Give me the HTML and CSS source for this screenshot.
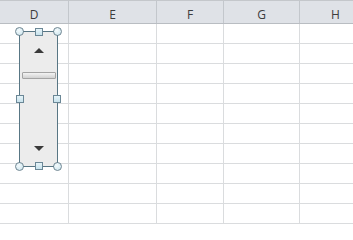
FILE: index.html
```html
<!DOCTYPE html>
<html>
<head>
<meta charset="utf-8">
<link rel="stylesheet" href="styles.css">
</head>
<body>
<div class="sheet">
  <div class="header">
    <div class="hcell c-d">D</div>
    <div class="hcell c-e">E</div>
    <div class="hcell c-f">F</div>
    <div class="hcell c-g">G</div>
    <div class="hcell c-h">H</div>
  </div>
  <div class="rows">
    <div class="row"><div class="cell c-d"></div><div class="cell c-e"></div><div class="cell c-f"></div><div class="cell c-g"></div><div class="cell c-h"></div></div>
    <div class="row"><div class="cell c-d"></div><div class="cell c-e"></div><div class="cell c-f"></div><div class="cell c-g"></div><div class="cell c-h"></div></div>
    <div class="row"><div class="cell c-d"></div><div class="cell c-e"></div><div class="cell c-f"></div><div class="cell c-g"></div><div class="cell c-h"></div></div>
    <div class="row"><div class="cell c-d"></div><div class="cell c-e"></div><div class="cell c-f"></div><div class="cell c-g"></div><div class="cell c-h"></div></div>
    <div class="row"><div class="cell c-d"></div><div class="cell c-e"></div><div class="cell c-f"></div><div class="cell c-g"></div><div class="cell c-h"></div></div>
    <div class="row"><div class="cell c-d"></div><div class="cell c-e"></div><div class="cell c-f"></div><div class="cell c-g"></div><div class="cell c-h"></div></div>
    <div class="row"><div class="cell c-d"></div><div class="cell c-e"></div><div class="cell c-f"></div><div class="cell c-g"></div><div class="cell c-h"></div></div>
    <div class="row"><div class="cell c-d"></div><div class="cell c-e"></div><div class="cell c-f"></div><div class="cell c-g"></div><div class="cell c-h"></div></div>
    <div class="row"><div class="cell c-d"></div><div class="cell c-e"></div><div class="cell c-f"></div><div class="cell c-g"></div><div class="cell c-h"></div></div>
    <div class="row"><div class="cell c-d"></div><div class="cell c-e"></div><div class="cell c-f"></div><div class="cell c-g"></div><div class="cell c-h"></div></div>
  </div>

  <div class="scrollctl">
    <div class="arrow-up"></div>
    <div class="thumb"></div>
    <div class="arrow-down"></div>

    <span class="h-circle tl"></span>
    <span class="h-circle tr"></span>
    <span class="h-circle bl"></span>
    <span class="h-circle br"></span>
    <span class="h-square tm"></span>
    <span class="h-square bm"></span>
    <span class="h-square ml"></span>
    <span class="h-square mr"></span>
  </div>
</div>
</body>
</html>
```
FILE: styles.css
```css
html, body {
  margin: 0;
  padding: 0;
  background: #ffffff;
  overflow: hidden;
}

.sheet {
  position: relative;
  width: 353px;
  height: 226px;
  overflow: hidden;
  font-family: "Open Sans", "DejaVu Sans", sans-serif;
}

.header {
  display: flex;
  height: 24px;
  box-sizing: border-box;
  border-top: 1px solid #c4c7cb;
  border-bottom: 1px solid #b9bdc2;
  background: #dfe2e7;
}

.hcell {
  box-sizing: border-box;
  border-right: 1px solid #c3c7cc;
  text-align: center;
  font-size: 12px;
  line-height: 15px;
  padding-top: 6px;
  color: #3c3c3c;
  flex: none;
}

.c-d { width: 69px; }
.c-e { width: 88px; }
.c-f { width: 67px; }
.c-g { width: 76px; }
.c-h { width: 72px; }

.rows {
  display: flex;
  flex-direction: column;
}

.row {
  display: flex;
  height: 20px;
  box-sizing: border-box;
  border-bottom: 1px solid #dadcde;
}

.cell {
  box-sizing: border-box;
  border-right: 1px solid #dadcde;
  flex: none;
}

/* scrollbar form control overlay */
.scrollctl {
  position: absolute;
  left: 19px;
  top: 31px;
  width: 39px;
  height: 136px;
  box-sizing: border-box;
  border: 1px solid #587684;
  background: #ececec;
  display: flex;
  flex-direction: column;
  align-items: center;
  padding: 16px 0 15px 1px;
}

.arrow-up {
  width: 0;
  height: 0;
  border-left: 5px solid transparent;
  border-right: 5px solid transparent;
  border-bottom: 5px solid #3a3a3a;
}

.arrow-down {
  margin-top: auto;
  width: 0;
  height: 0;
  border-left: 5px solid transparent;
  border-right: 5px solid transparent;
  border-top: 5px solid #3a3a3a;
}

.thumb {
  margin-top: 19px;
  width: 34px;
  height: 7px;
  box-sizing: border-box;
  border: 1px solid #a4a4a4;
  border-radius: 1px;
  background: linear-gradient(to bottom, #f4f4f4 0%, #e2e2e2 50%, #d2d2d2 100%);
}

.h-circle {
  position: absolute;
  width: 9px;
  height: 9px;
  box-sizing: border-box;
  border: 1px solid #6e8591;
  border-radius: 50%;
  background: radial-gradient(circle at 40% 35%, #f4fafc 0%, #d6eaf1 70%, #c4dde7 100%);
}

.h-circle.tl { left: -5px; top: -5px; }
.h-circle.tr { right: -5px; top: -5px; }
.h-circle.bl { left: -5px; bottom: -5px; }
.h-circle.br { right: -5px; bottom: -5px; }

.h-square {
  position: absolute;
  width: 8px;
  height: 8px;
  box-sizing: border-box;
  border: 1px solid #6b8796;
  background: linear-gradient(to bottom, #e6f4f9, #c8e2ec);
}

.h-square.tm { left: calc(50% - 4px); top: -4px; }
.h-square.bm { left: calc(50% - 4px); bottom: -4px; }
.h-square.ml { left: -4px; top: calc(50% - 4px); }
.h-square.mr { right: -4px; top: calc(50% - 4px); }
```
